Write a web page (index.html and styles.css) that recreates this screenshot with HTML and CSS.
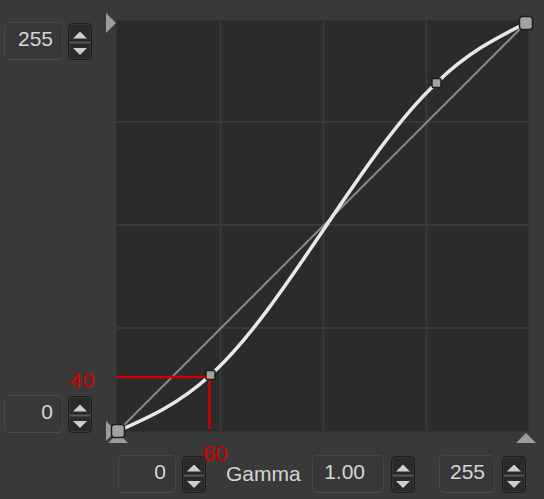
FILE: index.html
```html
<!DOCTYPE html>
<html>
<head>
<meta charset="utf-8">
<link rel="stylesheet" href="styles.css">
</head>
<body>
<svg class="defs" width="0" height="0" aria-hidden="true">
  <defs>
    <symbol id="stepper" viewBox="0 0 24 37">
      <rect x="0.5" y="0.5" width="23" height="36" rx="4" fill="#2a2a2a" stroke="#1c1c1c"/>
      <rect x="1.5" y="1.5" width="21" height="34" rx="3" fill="none" stroke="#353535"/>
      <line x1="2" y1="18" x2="22" y2="18" stroke="#202020" stroke-width="1"/>
      <line x1="2" y1="19.5" x2="22" y2="19.5" stroke="#5a5a5a" stroke-width="2"/>
      <polygon points="5,15.5 12,8.5 19,15.5" fill="#cdcdcd"/>
      <polygon points="5,25 12,32 19,25" fill="#cdcdcd"/>
    </symbol>
  </defs>
</svg>
<div class="app">
  <div class="main">
    <div class="out-col">
      <div class="spin">
        <div class="field">255</div>
        <svg class="stepper" viewBox="0 0 24 37"><use href="#stepper"/></svg>
      </div>
      <div class="spin">
        <div class="field">0</div>
        <svg class="stepper" viewBox="0 0 24 37"><use href="#stepper"/></svg>
      </div>
    </div>
    <svg class="chart" viewBox="100 0 444 446" width="444" height="446">
      <rect x="116.5" y="20.5" width="412" height="411" fill="#2b2b2b" stroke="#323232"/>
      <g stroke="#393939" stroke-width="2">
        <line x1="220.5" y1="21" x2="220.5" y2="431"/>
        <line x1="323.5" y1="21" x2="323.5" y2="431"/>
        <line x1="426.5" y1="21" x2="426.5" y2="431"/>
        <line x1="117" y1="122" x2="528" y2="122"/>
        <line x1="117" y1="225" x2="528" y2="225"/>
        <line x1="117" y1="328" x2="528" y2="328"/>
      </g>
      <line x1="118" y1="431" x2="526" y2="23" stroke="#8a8a8a" stroke-width="2"/>
      <path d="M118,431 C148.7,417.4 179.3,403.8 210.5,375 C285.3,307.7 360.7,153.6 436.5,83 C465.7,53.8 495.3,38.4 526,23" fill="none" stroke="#e8e8e8" stroke-width="3.5" stroke-linecap="round"/>
      <g stroke="#cc0000" stroke-width="2.5">
        <line x1="116" y1="377" x2="211" y2="377"/>
        <line x1="209.5" y1="377" x2="209.5" y2="429"/>
      </g>
      <g fill="#9c9c9c">
        <polygon points="106,13 116,23 106,33"/>
        <polygon points="106,421 116,431 106,441"/>
        <polygon points="108,443 118,433 128,443"/>
        <polygon points="516,443 526,433 536,443"/>
      </g>
      <g fill="#a2a2a2" stroke="#1e1e1e" stroke-width="1.5">
        <rect x="111.5" y="424.5" width="13" height="13" rx="3"/>
        <rect x="519.5" y="16.5" width="13" height="13" rx="3"/>
        <rect x="206" y="370.5" width="9" height="9" rx="1.5"/>
        <rect x="432" y="78.5" width="9" height="9" rx="1.5"/>
      </g>
    </svg>
  </div>
  <div class="in-row">
    <div class="spin in-min">
      <div class="field">0</div>
      <svg class="stepper" viewBox="0 0 24 37"><use href="#stepper"/></svg>
    </div>
    <span class="label">Gamma</span>
    <div class="spin in-gamma">
      <div class="field">1.00</div>
      <svg class="stepper" viewBox="0 0 24 37"><use href="#stepper"/></svg>
    </div>
    <div class="spin in-max">
      <div class="field">255</div>
      <svg class="stepper" viewBox="0 0 24 37"><use href="#stepper"/></svg>
    </div>
  </div>
  <span class="note note-y">40</span>
  <span class="note note-x">60</span>
</div>
</body>
</html>
```

FILE: styles.css
```css
html, body {
  margin: 0;
  padding: 0;
  background: #393939;
}

.defs {
  position: absolute;
  width: 0;
  height: 0;
  overflow: hidden;
}

.app {
  position: relative;
  width: 544px;
  height: 499px;
  overflow: hidden;
  font-family: "Liberation Sans", Arial, sans-serif;
  color: #d6d6d6;
}

.main {
  display: grid;
  grid-template-columns: 100px 444px;
  height: 446px;
}

.out-col {
  display: flex;
  flex-direction: column;
  justify-content: space-between;
  padding: 22px 0 13px 4px;
}

.chart {
  display: block;
}

.spin {
  display: flex;
  align-items: center;
  gap: 5px;
}

.field {
  box-sizing: border-box;
  width: 59px;
  height: 38px;
  border: 1px solid #474747;
  border-bottom-color: #4d4d4d;
  border-radius: 5px;
  background: #383838;
  text-align: right;
  padding-right: 9px;
  font-size: 21px;
  line-height: 32px;
}

.stepper {
  display: block;
  flex: none;
  width: 24px;
  height: 37px;
}

.in-row {
  display: flex;
  align-items: center;
  height: 38px;
  padding: 9px 0 0 118px;
}

.in-min {
  gap: 6px;
}

.in-min .field {
  width: 58px;
}

.label {
  margin-left: 20px;
  width: 86px;
  font-size: 21px;
  line-height: 32px;
}

.in-gamma {
  gap: 7px;
}

.in-gamma .field {
  width: 72px;
  padding-right: 18px;
}

.in-max {
  gap: 7px;
  margin-left: 24px;
}

.in-max .field {
  width: 56px;
}

.note {
  position: absolute;
  color: #d00000;
  font-size: 22px;
  line-height: 1;
}

.note-y {
  left: 70px;
  top: 370px;
}

.note-x {
  left: 203px;
  top: 443px;
}
```
